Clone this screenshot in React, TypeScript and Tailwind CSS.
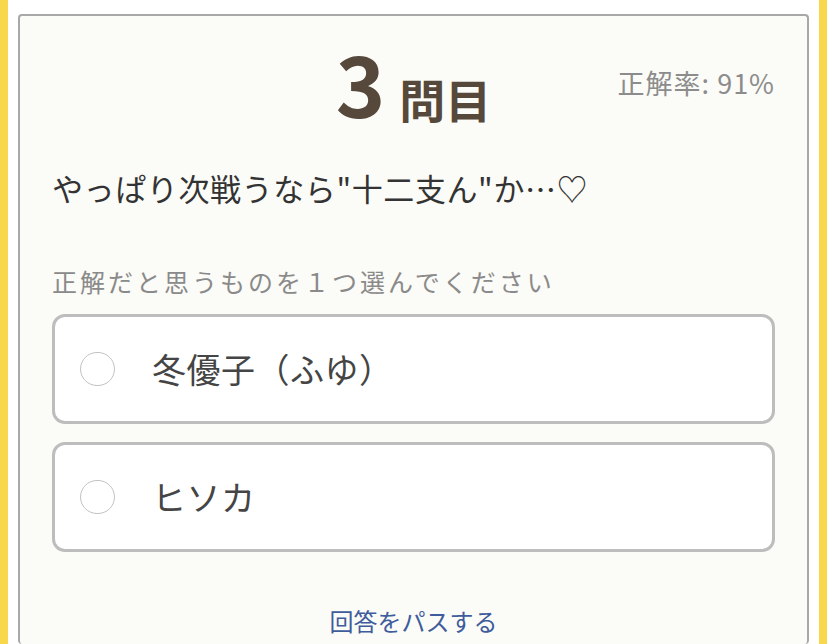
const font = { fontFamily: '"Noto Sans CJK JP", "Noto Sans", sans-serif' };

const choices = ['冬優子（ふゆ）', 'ヒソカ'];

function Choice({ label }: { label: string }) {
  return (
    <button className="flex h-[110px] w-full items-center rounded-[13px] border-[3px] border-[#bdbdbd] bg-white pl-[25px] text-left">
      <span className="h-[34px] w-[35px] shrink-0 rounded-full border-[1.5px] border-[#c2c2c2] bg-white" />
      <span className="ml-[37px] text-[34px] leading-none tracking-[0.5px] text-[#454545]">{label}</span>
    </button>
  );
}

export default function App() {
  return (
    <div className="h-[644px] w-[827px] overflow-hidden bg-white" style={font}>
      <div className="flex h-full border-x-[8px] border-[#f9d74b] bg-white px-[10px] pt-[14px]">
        <div className="flex w-full flex-col rounded-[4px] border-2 border-b-0 border-[#a8a8a8] bg-[#fbfbf7] px-8">
          <div className="grid grid-cols-[1fr_auto_1fr] items-start pt-[24px]">
            <div />
            <h1 className="flex items-baseline font-bold text-[#56483a]">
              <span className="text-[84px] leading-[84px]">3</span>
              <span className="ml-[14px] text-[46px] leading-none">問目</span>
            </h1>
            <div className="justify-self-end pt-[29px] text-[27px] leading-none tracking-[1px] text-[#8c8c8c]">正解率: 91%</div>
          </div>

          <p className="mt-[48px] text-[31px] leading-none tracking-[0.6px] text-[#333333]">やっぱり次戦うなら"十二支ん"か…♡</p>

          <p className="mt-[66px] text-[25px] leading-none tracking-[3px] text-[#8a8a8a]">正解だと思うものを１つ選んでください</p>

          <div className="mt-[20px] flex flex-col gap-[18px]">
            {choices.map((c) => (
              <Choice key={c} label={c} />
            ))}
          </div>

          <a href="#" className="mt-[57px] self-center text-[24px] leading-none text-[#3f5c9c]">
            回答をパスする
          </a>
        </div>
      </div>
    </div>
  );
}
